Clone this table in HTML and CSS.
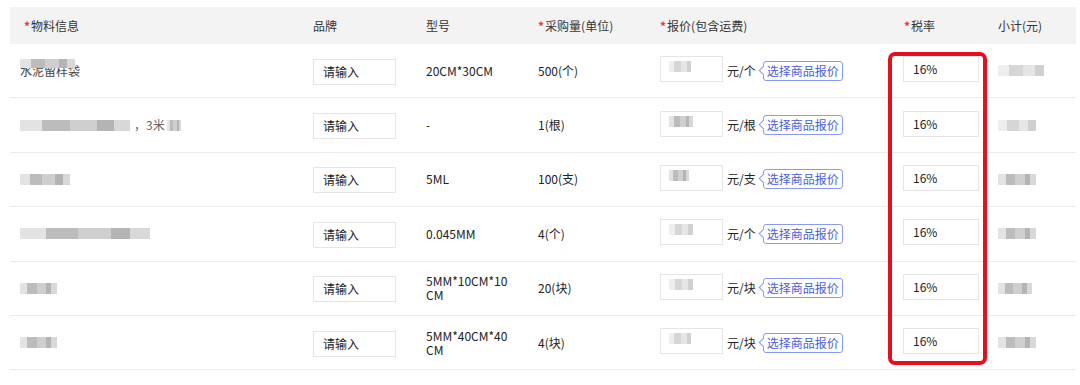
FILE: index.html
```html
<!DOCTYPE html>
<html lang="zh">
<head>
<meta charset="utf-8">
<link rel="stylesheet" href="styles.css">
</head>
<body>
<div class="wrap">
  <div class="table">
    <div class="row head">
      <div class="cell c1"><span class="req">*</span>物料信息</div>
      <div class="cell c2">品牌</div>
      <div class="cell c3">型号</div>
      <div class="cell c4"><span class="req">*</span>采购量(单位)</div>
      <div class="cell c5"><span class="req">*</span>报价(包含运费)</div>
      <div class="cell c6"><span class="req">*</span>税率</div>
      <div class="cell c7">小计(元)</div>
    </div>

    <div class="row">
      <div class="cell c1 name"><span class="partial">水泥留样袋<span class="mosaic m-top" style="width:55px"></span></span></div>
      <div class="cell c2"><span class="input brand">请输入</span></div>
      <div class="cell c3">20CM*30CM</div>
      <div class="cell c4">500(个)</div>
      <div class="cell c5"><span class="input price"><span class="mosaic light" style="width:22px"></span></span><span class="unit">元/个</span><span class="tag">选择商品报价</span></div>
      <div class="cell c6"><span class="input tax">16%</span></div>
      <div class="cell c7"><span class="mosaic light" style="width:46px"></span></div>
    </div>

    <div class="row">
      <div class="cell c1 name"><span class="mosaic" style="width:110px"></span><span class="plain">，3米</span><span class="mosaic" style="width:14px"></span></div>
      <div class="cell c2"><span class="input brand">请输入</span></div>
      <div class="cell c3">-</div>
      <div class="cell c4">1(根)</div>
      <div class="cell c5"><span class="input price"><span class="mosaic" style="width:24px"></span></span><span class="unit">元/根</span><span class="tag">选择商品报价</span></div>
      <div class="cell c6"><span class="input tax">16%</span></div>
      <div class="cell c7"><span class="mosaic light" style="width:38px"></span></div>
    </div>

    <div class="row">
      <div class="cell c1 name"><span class="mosaic" style="width:50px"></span></div>
      <div class="cell c2"><span class="input brand">请输入</span></div>
      <div class="cell c3">5ML</div>
      <div class="cell c4">100(支)</div>
      <div class="cell c5"><span class="input price"><span class="mosaic" style="width:20px"></span></span><span class="unit">元/支</span><span class="tag">选择商品报价</span></div>
      <div class="cell c6"><span class="input tax">16%</span></div>
      <div class="cell c7"><span class="mosaic" style="width:38px"></span></div>
    </div>

    <div class="row">
      <div class="cell c1 name"><span class="mosaic" style="width:130px"></span></div>
      <div class="cell c2"><span class="input brand">请输入</span></div>
      <div class="cell c3">0.045MM</div>
      <div class="cell c4">4(个)</div>
      <div class="cell c5"><span class="input price"><span class="mosaic light" style="width:24px"></span></span><span class="unit">元/个</span><span class="tag">选择商品报价</span></div>
      <div class="cell c6"><span class="input tax">16%</span></div>
      <div class="cell c7"><span class="mosaic" style="width:38px"></span></div>
    </div>

    <div class="row">
      <div class="cell c1 name"><span class="mosaic" style="width:37px"></span></div>
      <div class="cell c2"><span class="input brand">请输入</span></div>
      <div class="cell c3 wrapc">5MM*10CM*10CM</div>
      <div class="cell c4">20(块)</div>
      <div class="cell c5"><span class="input price"><span class="mosaic light" style="width:24px"></span></span><span class="unit">元/块</span><span class="tag">选择商品报价</span></div>
      <div class="cell c6"><span class="input tax">16%</span></div>
      <div class="cell c7"><span class="mosaic" style="width:34px"></span></div>
    </div>

    <div class="row">
      <div class="cell c1 name"><span class="mosaic" style="width:37px"></span></div>
      <div class="cell c2"><span class="input brand">请输入</span></div>
      <div class="cell c3 wrapc">5MM*40CM*40CM</div>
      <div class="cell c4">4(块)</div>
      <div class="cell c5"><span class="input price"><span class="mosaic light" style="width:22px"></span></span><span class="unit">元/块</span><span class="tag">选择商品报价</span></div>
      <div class="cell c6"><span class="input tax">16%</span></div>
      <div class="cell c7"><span class="mosaic" style="width:38px"></span></div>
    </div>

    <div class="highlight"></div>
  </div>
</div>
</body>
</html>
```

FILE: styles.css
```css
html, body {
  margin: 0;
  padding: 0;
  background: #ffffff;
}

body {
  font-family: "Noto Sans CJK SC", "Noto Sans", sans-serif;
  font-size: 12px;
  color: #222222;
}

.wrap {
  padding: 7px 0 0 10px;
}

.table {
  position: relative;
  width: 1066px;
}

.row {
  display: grid;
  grid-template-columns: 289px 113px 112px 122px 244px 94px 92px;
  height: 54.4px;
  box-sizing: border-box;
  border-bottom: 1px solid #ebebeb;
  align-items: center;
}

.row.head {
  height: 37px;
  background: #f3f3f3;
  border-bottom: none;
  color: #333333;
}

.cell {
  display: flex;
  align-items: center;
  padding-left: 14px;
  line-height: 14px;
  white-space: nowrap;
}

.cell.name { padding-left: 10px; }

.req {
  color: #e4393c;
  margin-right: 1px;
  font-size: 12px;
  font-weight: bold;
}

.wrapc {
  white-space: normal;
  word-break: break-all;
  width: 88px;
}

.input {
  display: inline-flex;
  align-items: center;
  box-sizing: border-box;
  height: 26px;
  border: 1px solid #e6e6e6;
  background: #fff;
  padding-left: 9px;
}

.input.brand {
  width: 83px;
  margin-top: 2px;
}

.input.price {
  width: 63px;
  margin-top: -3px;
  align-items: flex-start;
  padding-top: 4px;
  padding-left: 8px;
}

.input.tax {
  width: 76px;
  margin-left: -1px;
  margin-top: -3px;
}

.unit {
  margin-left: 4px;
}

.tag {
  position: relative;
  display: inline-flex;
  align-items: center;
  box-sizing: border-box;
  height: 20px;
  margin-left: 7px;
  padding: 0 3px;
  border: 1px solid #8a9af0;
  border-radius: 3px;
  color: #4a60d6;
  background: #fff;
}

.tag::before {
  content: "";
  position: absolute;
  left: -4px;
  top: 5px;
  width: 6px;
  height: 6px;
  background: #fff;
  border-left: 1px solid #8a9af0;
  border-bottom: 1px solid #8a9af0;
  transform: rotate(45deg);
}

.mosaic {
  display: inline-block;
  height: 11px;
  background: linear-gradient(90deg, #e3e3e3 0 20%, #bcbcbc 20% 45%, #cfcfcf 45% 70%, #b4b4b4 70% 85%, #d8d8d8 85% 100%);
  filter: blur(0.6px);
  vertical-align: middle;
}

.mosaic.light {
  background: linear-gradient(90deg, #eeeeee 0 25%, #d6d6d6 25% 55%, #e6e6e6 55% 80%, #d0d0d0 80% 100%);
}

.partial {
  position: relative;
  color: #444;
}

.mosaic.m-top {
  position: absolute;
  left: 0;
  top: -5px;
  height: 9px;
}

.plain {
  margin: 0 2px 0 4px;
  color: #666;
}

.highlight {
  position: absolute;
  left: 878px;
  top: 45px;
  width: 99px;
  height: 313px;
  box-sizing: border-box;
  border: 4px solid #e60f1e;
  border-radius: 7px;
  pointer-events: none;
}
```
